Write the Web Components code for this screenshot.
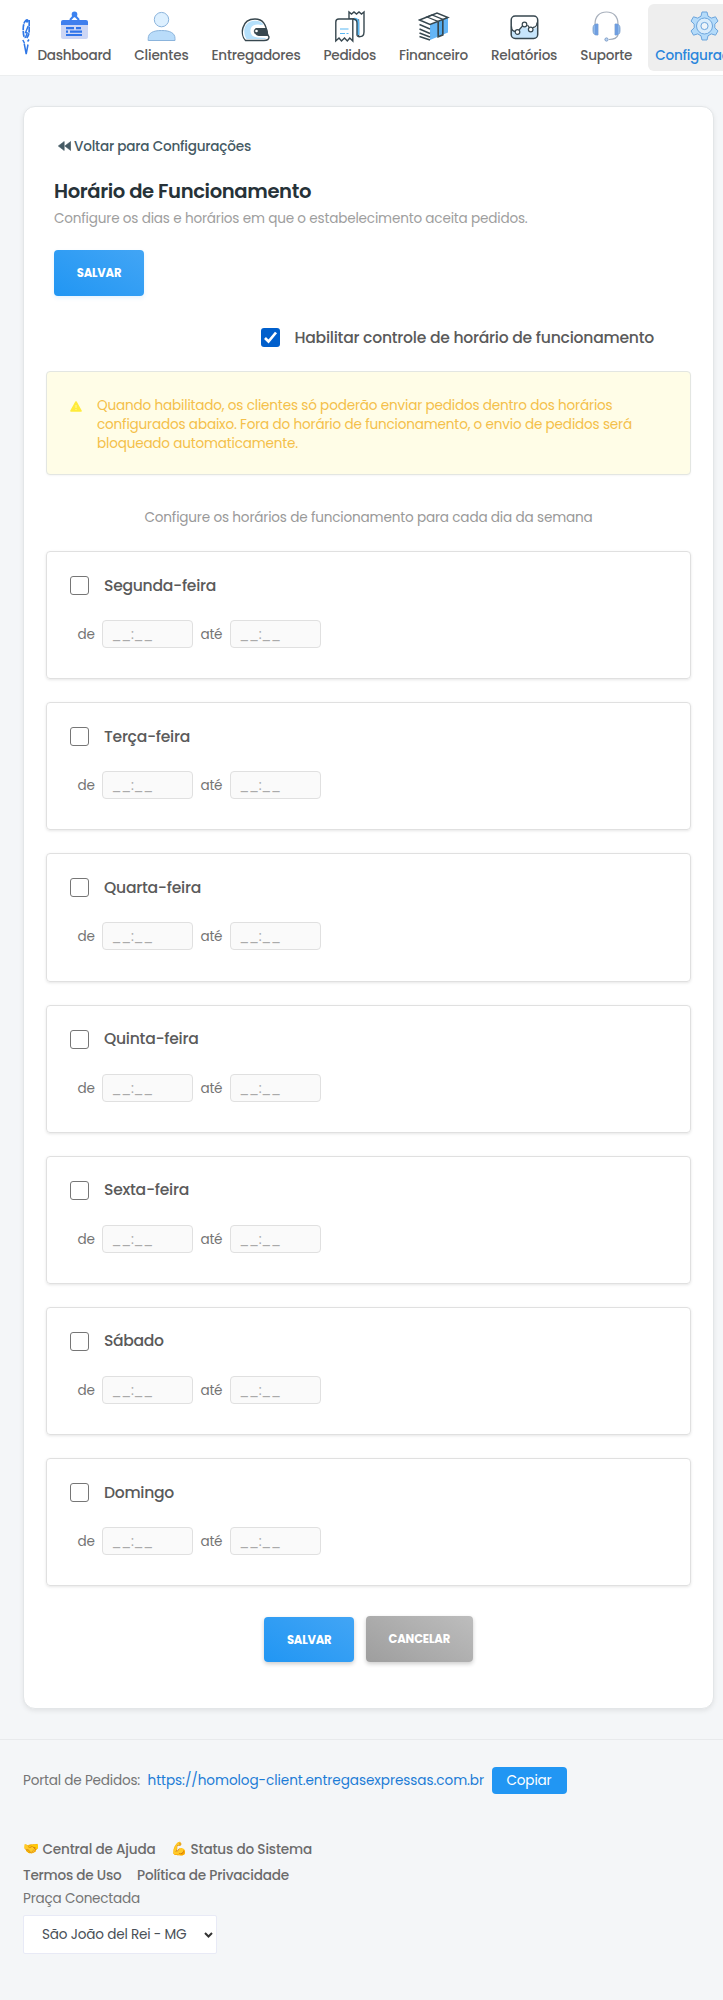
<!DOCTYPE html>
<html lang="pt-BR">
<head>
<meta charset="utf-8">
<title>Horário de Funcionamento</title>
<style>
body {
  --drop: 1px;
  margin: 0;
  background: #f4f6f8;
  color: #757575;
  font: 13.600px/20px Poppins, Inter, "Open Sans", sans-serif;
  overflow: hidden;
}
</style>
</head>
<body>

<ee-nav>
  <ee-nav-item icon="dashboard"><ee-text w="73.7">Dashboard</ee-text></ee-nav-item>
  <ee-nav-item icon="clientes"><ee-text w="54.3">Clientes</ee-text></ee-nav-item>
  <ee-nav-item icon="entregadores"><ee-text w="89">Entregadores</ee-text></ee-nav-item>
  <ee-nav-item icon="pedidos"><ee-text w="52.5">Pedidos</ee-text></ee-nav-item>
  <ee-nav-item icon="financeiro"><ee-text w="69">Financeiro</ee-text></ee-nav-item>
  <ee-nav-item icon="relatorios"><ee-text w="66.2">Relatórios</ee-text></ee-nav-item>
  <ee-nav-item icon="suporte"><ee-text w="52">Suporte</ee-text></ee-nav-item>
  <ee-nav-item icon="config" active><ee-text w="98">Configurações</ee-text></ee-nav-item>
</ee-nav>

<ee-panel>
  <ee-header slot="header">
    <ee-text slot="back" w="177">Voltar para Configurações</ee-text>
    <ee-text slot="title" w="257">Horário de Funcionamento</ee-text>
    <ee-text slot="subtitle" w="473.500">Configure os dias e horários em que o estabelecimento aceita pedidos.</ee-text>
    <ee-button><ee-text w="44.5">SALVAR</ee-text></ee-button>
  </ee-header>

  <ee-check slot="toggle" checked><ee-text w="359.5">Habilitar controle de horário de funcionamento</ee-text></ee-check>

  <ee-alert slot="alert">
    <ee-text w="515.5">Quando habilitado, os clientes só poderão enviar pedidos dentro dos horários</ee-text>
    <ee-text w="535">configurados abaixo. Fora do horário de funcionamento, o envio de pedidos será</ee-text>
    <ee-text w="201">bloqueado automaticamente.</ee-text>
  </ee-alert>

  <ee-text slot="help" w="448">Configure os horários de funcionamento para cada dia da semana</ee-text>

  <ee-day><ee-text w="112">Segunda-feira</ee-text></ee-day>
  <ee-day><ee-text w="86">Terça-feira</ee-text></ee-day>
  <ee-day><ee-text w="97">Quarta-feira</ee-text></ee-day>
  <ee-day><ee-text w="94.5">Quinta-feira</ee-text></ee-day>
  <ee-day><ee-text w="85">Sexta-feira</ee-text></ee-day>
  <ee-day><ee-text w="59.5">Sábado</ee-text></ee-day>
  <ee-day><ee-text w="70">Domingo</ee-text></ee-day>

  <ee-button slot="actions" raised><ee-text w="44.5">SALVAR</ee-text></ee-button>
  <ee-button slot="actions" raised kind="cancel"><ee-text w="61.5">CANCELAR</ee-text></ee-button>
</ee-panel>

<ee-footer></ee-footer>

<script>
const INK = '#37474f';

const ICONS = {
  dashboard: `
    <path d="M10 9 L14.5 4 L19 9" fill="none" stroke="#3b82f0" stroke-width="2"/>
    <circle cx="14.5" cy="3.4" r="2.8" fill="#3b82f0"/>
    <rect x="1" y="10" width="27" height="18" rx="2" fill="#ccd6f5"/>
    <path d="M1 14V11a2 2 0 0 1 2-2h23a2 2 0 0 1 2 2v3z" fill="#3f7fee"/>
    <path d="M6 17.2h8M16 17.2h5M6 20.6h2M10 20.6h12M6 24h16" stroke="#2e74ea" stroke-width="2.2"/>`,
  clientes: `
    <circle cx="14.5" cy="8.6" r="7.2" fill="#ddf0ff" stroke="#8bb4dc"/>
    <path d="M1.2 29.5v-2C1.200 22 6 19.500 14.500 19.500S28 22 28 27.500v2z" fill="#b9dcfa" stroke="#8bb4dc"/>`,
  entregadores: `
    <path d="M4.500 29.500C-1 24 0 8 14 8c8 0 11 5 12.500 15.500L28 26c0 2.500-2 3.500-5 3.500z" fill="#fff" stroke="${INK}" stroke-width="1.400"/>
    <path d="M5.500 28C1.500 22 2 10 14 9.700c4.500 0 7 1.300 8.500 3.800l-3 .5c-6-1.500-10.500 1-10 6.500.4 4 3 5.500 7 6l8.500.5c-.5 1-1 1-2 1z" fill="#b5e0fb"/>
    <path d="M15 17.500h10.500l1.500 7H18c-5-.5-6-5.500-3-7z" fill="${INK}" stroke="${INK}"/>
    <circle cx="15.500" cy="20" r="1.300" fill="#fff"/>`,
  pedidos: `
    <path d="M14 8V1l2.500 2L19 1l2.500 2L24 1l2.500 2L29 1v20c0 4-2 5-5.500 4.500V9l-5-1z" fill="#fff" stroke="${INK}" stroke-width="1.400"/>
    <path d="M19 8c3 0 4 1 4 4v12" fill="none" stroke="#59b8f4" stroke-width="2.600"/>
    <path d="M.8 30V11c0-2 1-3 3-3h14v22l-3-3-2.500 3L9.500 27l-3 3-2.500-3z" fill="#fff" stroke="${INK}" stroke-width="1.400"/>
    <path d="M18 8c3 0 4 1 4 4v12c0 1 1 2 3 1.500" fill="none" stroke="${INK}" stroke-width="1.300"/>
    <path d="M5 18h8.500M5 22.500h5M11.500 22.500h2" stroke="#59b8f4" stroke-width="1.200"/>`,
  financeiro: `
    <path d="M11 13.500L29 6.500v15L11 29z" fill="#64b5f6"/>
    <path d="M.5 9L18 2l11 4.500L11 13.500zM.5 9l10.500 4.500L29 6.500M.5 13.500L11 18M.5 18L11 22.500M.5 22L11 26M.5 25.500L11 29" fill="none" stroke="${INK}" stroke-width="1.400"/>
    <path d="M8 6l11 4.500V26l5-2V8.500L13 4z" fill="none" stroke="${INK}" stroke-width="1.300"/>
    <path d="M19.500 10.500l4-1.600v14.700l-4 1.700z" fill="#4ea8ec" stroke="${INK}"/>`,
  relatorios: `
    <rect x="1.200" y="5" width="26.500" height="22.500" rx="4" fill="#fff"/>
    <path d="M1.200 18l6 3L14.500 15l6 4 7.200-3v8a3.500 3.500 0 0 1-3.500 3.500H5a3.500 3.500 0 0 1-3.800-3.500z" fill="#c7e5fb"/>
    <rect x="1.200" y="5" width="26.500" height="22.500" rx="4" fill="none" stroke="${INK}" stroke-width="1.500"/>
    <path d="M1.500 15.500c0 4 2 5 4 5m3.500-1.500l4-4.500m4.500-.5l2 3m3.500-.500c3 0 4-3 4-5" fill="none" stroke="${INK}" stroke-width="1.300"/>
    <g fill="#fff" stroke="${INK}" stroke-width="1.200"><circle cx="7.500" cy="21" r="2.300"/><circle cx="14.500" cy="13.500" r="2.300"/><circle cx="20.700" cy="18.500" r="2.300"/></g>`,
  suporte: `
    <path d="M3 17V13C3 5 8 1 14.500 1S26 5 26 13v4" fill="none" stroke="#a9b1bd" stroke-width="1.200"/>
    <path d="M6 13v11c-3.500.5-5-1.500-5-4v-3c0-2.500 1.500-4.500 5-4zM23 13v11c3.500.5 5-1.500 5-4v-3c0-2.500-1.500-4.500-5-4z" fill="#8eb8ea" stroke="#7a9cc8" stroke-width=".8"/>
    <path d="M4.500 13v11M24.500 13v11" stroke="#6f9ee0" stroke-width="3"/>
    <path d="M26 24c-1 3-4 4.500-9 4.500" fill="none" stroke="#9faab8" stroke-width="1.200"/>
    <circle cx="14.500" cy="28.500" r="1.600" fill="#b9d4f4" stroke="#7d9cc6"/>`,
  config: `
    <path d="M12 1h5l1 4.200 3.300 1.900 4.200-1.300 2.500 4.300-3.200 3v3.800l3.200 3-2.500 4.300-4.200-1.300-3.300 1.900-1 4.200h-5l-1-4.200-3.300-1.900-4.200 1.300L1 19.900l3.200-3v-3.800L1 10.100l2.500-4.300 4.200 1.300L11 5.200z" fill="#b4dbfa" stroke="#6da5dc" stroke-linejoin="round"/>
    <circle cx="14.500" cy="15" r="8" fill="#d9ecfb" stroke="#6da5dc"/>
    <circle cx="14.500" cy="15" r="3.600" fill="#eef4f9" stroke="#6da5dc"/>`,
};

function define(name, html, setup) {
  customElements.define(name, class extends HTMLElement {
    constructor() {
      super();
      const root = this.attachShadow({mode: 'open'});
      root.innerHTML = html;
      if (setup) {
        setup.call(this, root);
      }
    }
  });
}

define('ee-nav', `
<style>
:host {
  display: flex;
  height: 76px;
  box-sizing: border-box;
  padding: 4px 0 4px;
  background: #fff;
  border-bottom: 1px solid #eceeef;
  overflow: hidden;
}
.logo {
  flex: none;
  width: 8px;
  height: 38px;
  margin: 14px 0 0 22px;
}
nav {
  flex: none;
  display: flex;
  gap: 8px;
}
</style>
<svg class="logo" viewBox="0 0 8 38" fill="none" stroke="#2f77e6">
  <path d="M6 2.200C3.500 1 1.200 5 1.200 11c0 4 .4 8 1.600 8.500M6 2.200L4.500 4.500M7.200 2v9c0 5-1 7.500-2.400 9" stroke-width="1.700" stroke-dasharray="6 .6"/>
  <path d="M6.200 8L3.600 14.500l1.600.5-1.800 5M.8 22l1.600 3M7 21.500l-1.400 2M2.200 25.500l2 10.500 1.800-9.500" stroke-width="1.500"/>
</svg>
<nav><slot></slot></nav>
`);

define('ee-nav-item', `
<style>
:host {
  display: flex;
  flex-direction: column;
  align-items: center;
  padding: 7px 7.500px 0;
  border-radius: 6px;
  color: #5c5c5c;
  font-weight: 500;
}
:host([active]) {
  background: #eee;
  color: #2b86dc;
}
svg {
  flex: none;
  width: 29px;
  height: 31px;
  margin-bottom: 3px;
  overflow: visible;
}
</style>
<svg viewBox="0 0 29 31"></svg>
<slot></slot>
`, function(root) {
  root.querySelector('svg').innerHTML = ICONS[this.getAttribute('icon')];
});

define('ee-panel', `
<style>
:host {
  display: block;
  margin: 30px 9px 0 23px;
  padding: 27px 22px 46px;
  background: #fff;
  border: 1px solid #e3e6e8;
  border-radius: 12px;
  box-shadow: 0 2px 5px rgba(0, 0, 0, 0.08);
}
.toggle {
  display: flex;
  justify-content: flex-end;
  margin: 32px 37px 24px 0;
}
.help {
  display: flex;
  justify-content: center;
  margin: 32px 0 24px;
  color: #999;
}
.days {
  display: grid;
  gap: 23px;
}
.actions {
  display: flex;
  justify-content: center;
  align-items: flex-end;
  gap: 11.500px;
  margin-top: 30px;
}
</style>
<slot name="header"></slot>
<div class="toggle"><slot name="toggle"></slot></div>
<slot name="alert"></slot>
<div class="help"><slot name="help"></slot></div>
<div class="days"><slot></slot></div>
<div class="actions"><slot name="actions"></slot></div>
`);

define('ee-header', `
<style>
:host {
  display: block;
  padding-left: 8px;
}
.back {
  display: flex;
  align-items: center;
  gap: 3.500px;
  height: 24px;
  padding-left: 3.500px;
  color: #455a64;
  font-weight: 500;
}
.back svg {
  width: 13px;
  height: 10px;
}
h1 {
  --drop: 0px;
  margin: 18px 0 2px;
  color: #263238;
  font-size: 19.600px;
  line-height: 30px;
  font-weight: 600;
}
p {
  height: 20px;
  margin: 0 0 22px;
  color: #9e9e9e;
}
</style>
<div class="back">
  <svg viewBox="0 0 13 10" fill="currentColor"><path d="M6.200.5v9L.3 5zM12.700.5v9L6.800 5z" stroke="currentColor" stroke-width=".6" stroke-linejoin="round"/></svg>
  <slot name="back"></slot>
</div>
<h1><slot name="title"></slot></h1>
<p><slot name="subtitle"></slot></p>
<slot></slot>
`);

define('ee-button', `
<style>
:host {
  --drop: 0px;
  display: block;
  box-sizing: border-box;
  width: fit-content;
  height: 46px;
  padding: 0 22.800px;
  border-radius: 4px;
  background: linear-gradient(30deg, #2196f3, #42a5f5);
  box-shadow: 0 2px 4px rgba(33, 150, 243, 0.12);
  color: #fff;
  font-size: 11.600px;
  line-height: 46px;
  font-weight: 700;
}
:host([raised]) {
  height: 45px;
  box-shadow: 0 2px 4px rgba(0, 0, 0, 0.2);
}
:host([kind="cancel"]) {
  height: 46px;
  background: linear-gradient(30deg, #9e9e9e, #bdbdbd);
}
</style>
<slot></slot>
`);

define('ee-check', `
<style>
:host {
  --drop: 0px;
  display: flex;
  align-items: center;
  gap: 15px;
  height: 19px;
  color: #5a5a5a;
  font-size: 15.600px;
  font-weight: 500;
}
.box {
  flex: none;
  box-sizing: border-box;
  width: 19px;
  height: 19px;
  border: 1px solid #767676;
  border-radius: 3px;
  background: #fff;
}
svg {
  display: none;
}
:host([checked]) .box {
  border: 0;
  background: #005fcc;
}
:host([checked]) svg {
  display: block;
}
</style>
<div class="box"><svg viewBox="0 0 19 19" fill="none" stroke="#fff" stroke-width="2.700"><path d="M4 10l3.500 3.500L15 4.500"/></svg></div>
<slot></slot>
`);

define('ee-alert', `
<style>
:host {
  --drop: 0.500px;
  display: flex;
  box-sizing: border-box;
  height: 104px;
  padding: 23px;
  gap: 15px;
  background: #fffde7;
  border: 1px solid #e3e6e2;
  border-radius: 4px;
  box-shadow: 0 1px 2px rgba(0, 0, 0, 0.04);
  color: #f4c04a;
  line-height: 19px;
}
svg {
  flex: none;
  width: 12px;
  height: 11px;
  margin-top: 6px;
}
</style>
<svg viewBox="0 0 12 11"><path d="M6 1l5 9H1z" fill="#ffeb3b" stroke="#ffeb3b" stroke-width="1.600" stroke-linejoin="round"/><path d="M6 4v3M6 8v1" stroke="#fff59d"/></svg>
<div><slot></slot></div>
`);

define('ee-time', `
<style>
:host {
  display: block;
  box-sizing: border-box;
  width: 91px;
  height: 28px;
  padding: 0 8.500px;
  background: #fafafa;
  border: 1px solid #e0e0e0;
  border-radius: 4px;
  color: #aaa;
  line-height: 26px;
}
</style>
<ee-text w="41.500">__:__</ee-text>
`);

define('ee-day', `
<style>
:host {
  display: block;
  box-sizing: border-box;
  height: 128.200px;
  padding: 24px 23px;
  border: 1px solid #e0e0e0;
  border-radius: 4px;
  box-shadow: 0 1px 3px rgba(0, 0, 0, 0.1);
}
.row {
  display: flex;
  align-items: center;
  margin: 25px 0 0 7.500px;
}
.row > :nth-child(2) {
  margin: 0 7.500px 0 7.300px;
}
.row > :nth-child(4) {
  margin-left: 7.500px;
}
</style>
<ee-check><slot></slot></ee-check>
<div class="row">
  <ee-text w="17.200">de</ee-text>
  <ee-time></ee-time>
  <ee-text w="21.800">até</ee-text>
  <ee-time></ee-time>
</div>
`);

define('ee-footer', `
<style>
:host {
  display: block;
  margin-top: 30px;
  padding: 26.500px 23px 0;
  border-top: 1px solid #e8eaec;
}
.portal, .links {
  display: flex;
  align-items: center;
}
.portal {
  gap: 7.500px;
  height: 27px;
}
a {
  color: #1c7cd6;
}
button {
  box-sizing: border-box;
  height: 27px;
  padding: 0 15px;
  border: 0;
  border-radius: 4px;
  background: #2196f3;
  color: #fff;
  font: inherit;
}
.links {
  height: 26px;
  gap: 15.500px;
  color: #6b6b6b;
  font-weight: 500;
}
.links span {
  display: flex;
  gap: 4px;
}
.portal + .links {
  margin-top: 42.500px;
}
.emoji {
  width: 15.500px;
  font: 13px/20px "Noto Color Emoji", sans-serif;
}
.label {
  height: 20px;
}
.city {
  --drop: 0px;
  display: flex;
  align-items: center;
  justify-content: space-between;
  box-sizing: border-box;
  width: 194px;
  height: 39px;
  margin-top: 7px;
  padding: 0 3px 0 18px;
  background: #fff;
  border: 1px solid #e8eaf6;
  border-radius: 2px;
  color: #495057;
}
.city svg {
  width: 9px;
  height: 6px;
}
</style>
<div class="portal">
  <ee-text w="117">Portal de Pedidos:</ee-text>
  <a><ee-text w="336.500">https://homolog-client.entregasexpressas.com.br</ee-text></a>
  <button><ee-text w="45">Copiar</ee-text></button>
</div>
<div class="links">
  <span><i class="emoji">🤝</i><ee-text w="113">Central de Ajuda</ee-text></span>
  <span><i class="emoji">💪</i><ee-text w="121.500">Status do Sistema</ee-text></span>
</div>
<div class="links">
  <ee-text w="98.500">Termos de Uso</ee-text>
  <ee-text w="152">Política de Privacidade</ee-text>
</div>
<div class="label"><ee-text w="117">Praça Conectada</ee-text></div>
<div class="city">
  <ee-text w="144.500">São João del Rei - MG</ee-text>
  <svg viewBox="0 0 9 6" fill="none" stroke="#333" stroke-width="2"><path d="M1 1l3.500 3.500L8 1"/></svg>
</div>
`);

/**
 * One line of text, tracked so that it fills [w] pixels. Defined last, since it measures
 * itself and so needs its ancestors in place.
 *
 * --drop lowers the text in its line, without changing the height of the line.
 */
class TextElement extends HTMLElement {
  constructor() {
    super();
    this.attachShadow({mode: 'open'}).innerHTML = `
<style>
:host {
  display: block;
  padding-top: var(--drop, 0px);
  margin-bottom: calc(0px - var(--drop, 0px));
  white-space: nowrap;
}
</style>
<slot></slot>
    `;
  }

  connectedCallback() {
    const width = parseFloat(this.getAttribute('w'));
    const range = document.createRange();
    range.selectNodeContents(this);
    const natural = range.getBoundingClientRect().width;
    this.style.letterSpacing = `${(width - natural) / this.textContent.length}px`;
    this.style.width = `${width}px`;
  }
}

customElements.define('ee-text', TextElement);
</script>
</body>
</html>
